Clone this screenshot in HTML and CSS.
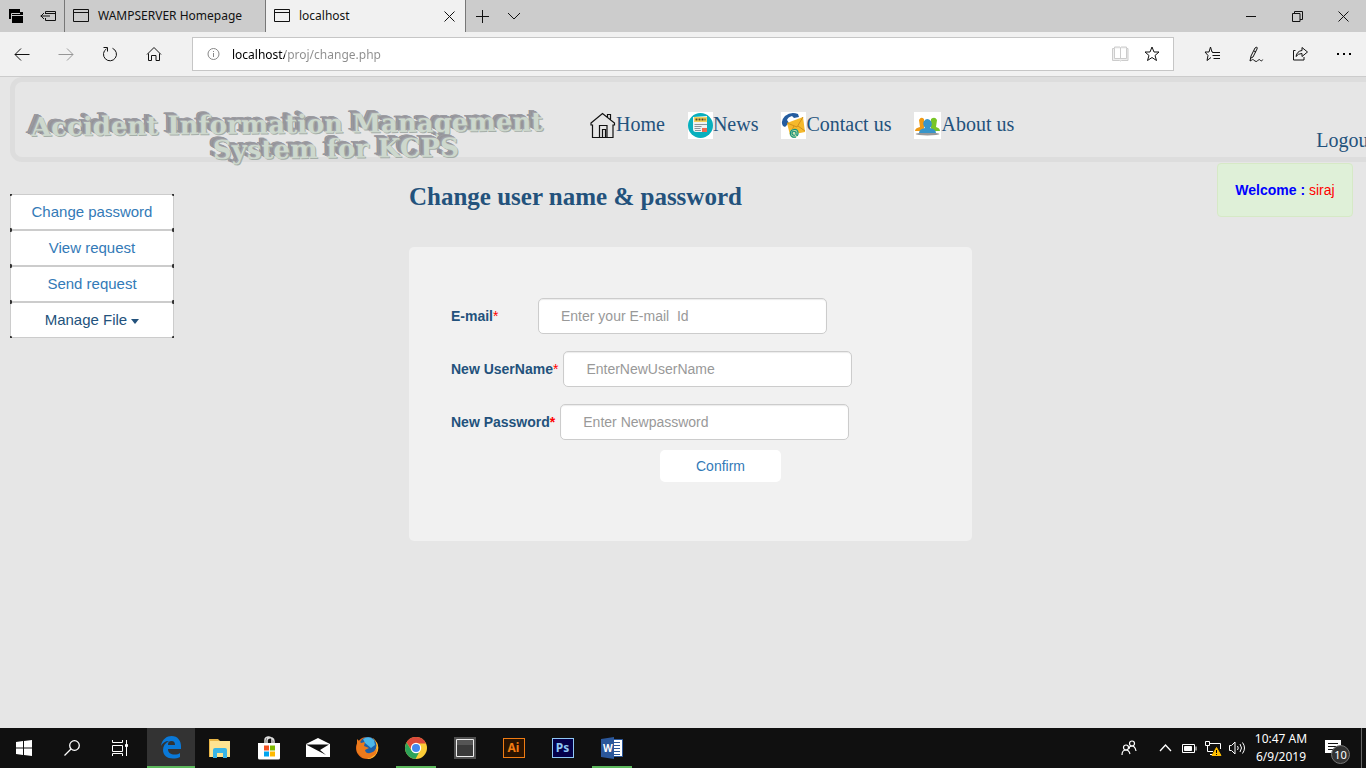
FILE: index.html
```html
<!DOCTYPE html>
<html lang="en">
<head>
<meta charset="utf-8">
<title>localhost</title>
<link rel="stylesheet" href="styles.css">
</head>
<body>
<header class="browser">
  <div class="tabbar">
    <button class="tab-tool first" aria-label="Tabs set aside"><svg width="16" height="16" viewBox="0 0 16 16"><path d="M1 1h11v3h3v11H4v-4H1z"/><path d="M3.500 11V5.500H12M4 7.500h11" stroke="#ccc" fill="none"/></svg></button>
    <button class="tab-tool" aria-label="Set tabs aside"><svg class="line" width="16" height="16" viewBox="0 0 16 16"><path d="M5.500 6V3.500h10v9h-10V10M5.500 5.500h10M.5 8h9.500M4 5L1 8l3 3"/></svg></button>
    <button class="tab"><svg class="line" width="16" height="14" viewBox="0 0 16 14"><path d="M.5.5h15v12H.5zM.5 3.500h15"/></svg><span>WAMPSERVER Homepage</span></button>
    <div class="tab active"><svg class="line" width="16" height="14" viewBox="0 0 16 14"><path d="M.5.5h15v12H.5zM.5 3.500h15"/></svg><span>localhost</span>
      <button class="tab-close" aria-label="Close tab"><svg class="line" width="11" height="11" viewBox="0 0 11 11"><path d="M.5.5l10 10M10.500.5l-10 10"/></svg></button></div>
    <button class="tab-tool" aria-label="New tab"><svg class="line" width="14" height="14" viewBox="0 0 14 14"><path d="M7.500 1v13M1 7.500h13"/></svg></button>
    <button class="tab-tool" aria-label="Show tab previews"><svg class="line" width="14" height="8" viewBox="0 0 14 8"><path d="M1 1l6 6 6-6"/></svg></button>
    <div class="window-buttons">
      <button aria-label="Minimize"><svg class="line" width="11" height="11" viewBox="0 0 11 11"><path d="M0 5.500h10"/></svg></button>
      <button aria-label="Restore"><svg class="line" width="11" height="11" viewBox="0 0 11 11"><path d="M.5 2.500h7.500v8H.5zM2.500 2.500v-2h8v8H8"/></svg></button>
      <button aria-label="Close"><svg class="line" width="11" height="11" viewBox="0 0 11 11"><path d="M.5.5l10 10M10.500.5l-10 10"/></svg></button>
    </div>
  </div>
  <div class="toolbar">
    <button aria-label="Back"><svg class="line" width="16" height="16" viewBox="0 0 16 16"><path d="M15.500 8.500H1M7 2.500l-6 6 6 6"/></svg></button>
    <button aria-label="Forward" class="faded"><svg class="line" width="16" height="16" viewBox="0 0 16 16"><path d="M.5 8.500H15M9 2.500l6 6-6 6"/></svg></button>
    <button aria-label="Refresh"><svg class="line" width="16" height="16" viewBox="0 0 16 16"><path d="M10.500 2.300a6.500 6.500 0 1 1-6 .5M1.500 1.500h4v4"/></svg></button>
    <button aria-label="Home page"><svg class="line" width="16" height="16" viewBox="0 0 16 16"><path d="M1 8.500L8 1.500l7 7M2.500 7.500v7h3V9.500h4.500v5h3.500v-7"/></svg></button>
    <div class="address">
      <svg class="info" width="14" height="14" viewBox="0 0 14 14"><circle cx="6.500" cy="7" r="5.500"/><path d="M6.500 6v4M6.500 4v1"/></svg>
      <input class="url" type="text" aria-label="Address" value="localhost/proj/change.php">
      <button aria-label="Reading view"><svg width="17" height="16" viewBox="0 0 17 16" fill="#eee" stroke="#ccc"><path d="M.5 2.500h2v-1.500h5.500l.5.5.5-.5h5.500v1.500h1.500v12H9.500l-1 .5-1-.5h-7zM2.500 2.500v10h5.500l.5.5.5-.5h5.500v-10M8.500 2v11"/></svg></button>
      <button aria-label="Add to favorites"><svg class="line" width="16" height="16" viewBox="0 0 16 16"><path d="M8 1l2 5h5l-4 3.500 1.500 5L8 11.500l-4.500 3 1.500-5L1 6h5z"/></svg></button>
    </div>
    <div class="actions">
      <button aria-label="Favorites"><svg class="line" width="17" height="16" viewBox="0 0 17 16"><path d="M9.500 6.500L8 6 6.500 1 5 6H1l3 3.500-1 5 4-3M8.500 6.500H16M8.500 9.500H16M9.500 12.500H16"/></svg></button>
      <button aria-label="Add notes"><svg class="line" width="16" height="16" viewBox="0 0 16 16"><path d="M2 15l1-5L7 2q3-2 2 1L5 11l-2 1M6 5l2 1M2 15c4-2 2-2 5 0s3-3 5-1 2 0 3-.5"/></svg></button>
      <button aria-label="Share"><svg class="line" width="17" height="16" viewBox="0 0 17 16"><path d="M3.500 4.500h-2v9.500h10.500v-3M4 10.500Q5 5 10 4.500V1.500l5.500 4.500L10 10.500V7.500Q6 7.500 4 10.500z"/></svg></button>
      <button aria-label="More"><svg width="16" height="4" viewBox="0 0 16 4"><path d="M1 1h2v2H1zM7 1h2v2H7zM13 1h2v2h-2z"/></svg></button>
    </div>
  </div>
</header>

<div class="page">
  <header class="site-header">
    <div class="brand"><span class="brand-line">Accident Information Management</span><span class="brand-line second">System for KCPS</span></div>
    <nav class="site-nav">
      <a href="#home"><svg width="26" height="27" viewBox="0 0 26 27" fill="none" stroke="#111" stroke-width="1.200"><path d="M1 11L12.500 1.500 24.500 11v2H23v12.500H2.500V13H1zM17.500 5V2.500h3V8M9.500 25V13.500h7.500V25M12.500 25v-7.500h3V25"/></svg>Home</a>
      <a href="#news"><svg width="25" height="27" viewBox="0 0 25 27"><path fill="#fff" d="M0 0h25v27H0z"/><circle cx="12.500" cy="13.500" r="12.500" fill="#08afbd"/><path fill="#eef3f3" d="M5 5l14-1v16H8q-3 0-3-3z"/><path fill="#f4d35f" d="M6 5h13v5H6z"/><path stroke="#584b25" stroke-width="2" stroke-dasharray="2 1" d="M7.500 7.500h10"/><path stroke="#8b949b" d="M6.500 12.500H19M6.500 14.500h7M6.500 16.500h6M7 18.500h6"/><path fill="#f1694e" d="M14 16h5v4h-5z"/></svg>News</a>
      <a href="#contact"><svg width="25" height="27" viewBox="0 0 25 27"><path fill="#fff" d="M0 0h25v27H0z"/><path fill="#245c9f" d="M2 14Q-1 9 4 4q6-5 13-2l1 3-5 1-2-2q-4 1-5 4l2 3-4 4z"/><path fill="#f5b92c" d="M6 11l16-6 2 15-15 3z"/><path fill="none" stroke="#c98716" stroke-width=".8" d="M6 11l10 4 6-10M9 22l4-8M24 19l-7-5"/><circle cx="13" cy="21.500" r="4.500" fill="#cfe3b0"/><path fill="none" stroke="#14917b" stroke-width="1.200" d="M15 25q-5 1-5.500-3T13 17.500t4 3.500-2 1.500v-3M15 21.500a2 2 0 1 0-1 1.500"/></svg>Contact us</a>
      <a href="#about"><svg width="27" height="27" viewBox="0 0 27 27"><path fill="#fff" d="M0 0h27v27H0z"/><ellipse cx="13.500" cy="22" rx="12" ry="1.500" fill="#999"/><path fill="#ef9a14" d="M1 19q0-3 5-4l-1-7q2-4 5-1v9l-1 3z"/><path fill="#78c527" d="M26 19q0-3-4-4l1-7q-2-4-6-1v9l1 3z"/><path fill="#3895c9" d="M5 21q0-4 6-5-3-4-1-7 3-4 7 0 2 4-1 7 6 1 6 5z"/></svg>About us</a>
    </nav>
    <a class="logout" href="#logout">Logout</a>
  </header>

  <div class="columns">
    <nav class="side">
      <ul>
        <li><a href="#change">Change password</a></li>
        <li><a href="#view">View request</a></li>
        <li><a href="#send">Send request</a></li>
        <li><button class="menu-toggle">Manage File <span class="caret"></span></button></li>
      </ul>
    </nav>
    <main class="content">
      <h2>Change user name &amp; password</h2>
      <form class="card">
        <div class="field"><label class="short" for="email">E-mail<span class="star">*</span></label><input id="email" type="text" placeholder="Enter your E-mail  Id"></div>
        <div class="field"><label for="user">New UserName<span class="star">*</span></label><input id="user" type="text" placeholder="EnterNewUserName"></div>
        <div class="field"><label for="pass">New Password<span class="star strong">*</span></label><input id="pass" type="password" placeholder="Enter Newpassword"></div>
        <button class="confirm" type="button">Confirm</button>
      </form>
    </main>
    <aside class="welcome"><b>Welcome :</b> <span>siraj</span></aside>
  </div>
</div>

<footer class="taskbar">
  <button class="sys" aria-label="Start"><svg width="16" height="16" viewBox="0 0 16 16" fill="#fff"><path d="M0 2l7-1v6.500H0zM8 1l8-1v7.500H8zM0 8.500h7V15l-7-1zM8 8.500h8V16l-8-1z"/></svg></button>
  <button class="sys" aria-label="Search"><svg width="16" height="16" viewBox="0 0 16 16" fill="none" stroke="#fff" stroke-width="1.300"><circle cx="10.500" cy="5.500" r="4.800"/><path d="M7 9L.5 15.500"/></svg></button>
  <button class="sys" aria-label="Task view"><svg width="17" height="16" viewBox="0 0 17 16" fill="none" stroke="#fff"><path d="M.5 0v2.500h10V0M.5 5.500h10v6H.5zM.5 16v-2.500h10V16M14.500 0v16"/><path fill="#fff" d="M13.500 4.500h2v2h-2z"/></svg></button>
  <div class="apps">
    <button class="app current" aria-label="Edge"><svg width="22" height="24" viewBox="0 0 22 24"><path fill="#0a79d8" d="M1 11C2 4 7 1 11.500 1 18 1 21 6 21 11v3H8c0 4 3 5.500 6.500 5.500 2.500 0 4-.5 5.500-1.500v4c-2 1-4.500 1.500-7 1.500C7 23.500 3 20 3 15c0-4 2-7 6-9-4 0-6.500 2-8 5zm7-1h7c0-2.500-1-4-3.500-4S8 7.500 8 10z"/></svg></button>
    <button class="app" aria-label="File Explorer"><svg width="22" height="20" viewBox="0 0 22 20"><path fill="#e8b546" d="M0 1h9l2 2h10v16H0z"/><path fill="#fee391" d="M1 3h20v16H1z"/><path fill="#38b5e7" d="M4 12q0-2 2-2h10q2 0 2 2v8h-4v-5H8v5H4z"/></svg></button>
    <button class="app" aria-label="Store"><svg width="24" height="24" viewBox="0 0 24 24"><path fill="none" stroke="#ddd" stroke-width="1.500" d="M8 7V4q0-2.500 3-3t4 2v4M10 7V4q1-3 5-2 2 1 2 3v2"/><path fill="#fff" d="M1 7h22v15q0 1.500-1.500 1.500h-19Q1 23.500 1 22z"/><path fill="#f25022" d="M7 9.500h5v5H7z"/><path fill="#7fba00" d="M13 9.500h5v5h-5z"/><path fill="#00a4ef" d="M7 15.500h5v5H7z"/><path fill="#ffb900" d="M13 15.500h5v5h-5z"/></svg></button>
    <button class="app" aria-label="Mail"><svg width="24" height="20" viewBox="0 0 24 20"><path fill="#fff" d="M0 6l12-6 12 6v13H0z"/><path fill="#101010" d="M0 6.500h23L14 12l6 5z"/></svg></button>
    <button class="app" aria-label="Firefox"><svg width="24" height="24" viewBox="0 0 24 24"><circle cx="12" cy="12" r="11" fill="#e66a16"/><path fill="#ffb52e" d="M18 2q8 7 4 15-3 6-10 6 8-5 8-11z"/><circle cx="13" cy="9.500" r="8.500" fill="#1c5fa8"/><path fill="#4db7e8" d="M8 3q6-4 11 1l1 5-4 3-6-5z"/><path fill="#ec7a1c" d="M2 3l4 4 4-1-1 4 5 2-4 2q1 4 5 3 5-1 7-5l-1 6-6 4H8l-6-6z"/></svg></button>
    <button class="app open" aria-label="Chrome"><svg width="24" height="24" viewBox="0 0 24 24"><circle cx="12" cy="12" r="11" fill="#fbcc36"/><path fill="#db4a3c" d="M2.500 6.500A11 11 0 0 1 22 7.500H12L7.500 14z"/><path fill="#2da35a" d="M2.500 6.500l5 8Q10 18 15 16.500L11.500 23A11 11 0 0 1 2.500 6.500z"/><circle cx="12" cy="12" r="5.200" fill="#fff"/><circle cx="12" cy="12" r="4" fill="#4388ef"/></svg></button>
    <button class="app" aria-label="Window"><svg width="22" height="22" viewBox="0 0 22 22"><path fill="#505050" d="M0 0h22v22H0z"/><path fill="#3a3a3a" stroke="#eee" d="M2.500 2.500h17v17h-17z"/><path fill="#555" d="M3 3h16v5H3z"/></svg></button>
    <button class="app" aria-label="Illustrator"><span class="adobe ai">Ai</span></button>
    <button class="app" aria-label="Photoshop"><span class="adobe ps">Ps</span></button>
    <button class="app open" aria-label="Word"><svg width="22" height="22" viewBox="0 0 22 22"><path fill="#fff" stroke="#2b579a" d="M11 2.500h10.500v17H11z"/><path stroke="#2b579a" d="M13 5.500h6M13 8.500h6M13 11.500h6M13 14.500h6M13 17.500h6"/><path fill="#2b579a" d="M0 2l13-2v22L0 20z"/><text x="2" y="15" class="word-w">W</text></svg></button>
  </div>
  <div class="tray">
    <button class="people" aria-label="People"><svg width="16" height="16" viewBox="0 0 16 16" fill="none" stroke="#fff" stroke-width="1.200"><circle cx="5" cy="7.500" r="2.500"/><path d="M1 15q0-5 4-5 3 0 4 4"/><circle cx="11" cy="3.500" r="2.500"/><path d="M8 9q0-3 3-3t4 5"/></svg></button>
    <button aria-label="Show hidden icons"><svg width="13" height="8" viewBox="0 0 13 8" fill="none" stroke="#fff" stroke-width="1.300"><path d="M1 7l5.500-6L12 7"/></svg></button>
    <button aria-label="Battery"><svg width="15" height="9" viewBox="0 0 15 9" fill="none" stroke="#fff"><path d="M.5.5h12v8H.5zM14 2.500v4"/><path fill="#fff" d="M2.500 2.500h7v4h-7z"/></svg></button>
    <button aria-label="Network"><svg width="17" height="15" viewBox="0 0 17 15" fill="none" stroke="#fff"><path d="M.5.500h4v4h-4zM5 2.500h10.500V8M2.500 5v5.500H8M5 13.500h3"/><path fill="#ffbf00" stroke="#ffbf00" d="M11.500 6.500l4.500 8H7z"/><path stroke="#000" d="M11.500 9v3M11.500 13v1"/></svg></button>
    <button aria-label="Volume"><svg width="17" height="14" viewBox="0 0 17 14" fill="none" stroke="#fff"><path d="M.5 4.500h2l3.500-3.500v12L2.500 9.500h-2zM8.500 5q1.500 2 0 4M11 3q3 4 0 8M13.500 1.500q4 5.500 0 11"/></svg></button>
    <time class="clock"><span>10:47 AM</span><span>6/9/2019</span></time>
    <button class="notices" aria-label="Notifications"><svg width="16" height="17" viewBox="0 0 16 17"><path fill="#fff" d="M0 0h16v13h-6l-3 3v-3H0z"/><path stroke="#111" d="M3 3.500h10M3 6.500h10M3 9.500h7"/></svg><span class="badge">10</span></button>
    <span class="peek"></span>
  </div>
</footer>
</body>
</html>
```
FILE: styles.css
```css
* { box-sizing: border-box; }
body {
  margin: 0;
  height: 100vh;
  display: flex;
  flex-direction: column;
  overflow: hidden;
  background: #e6e6e6;
  font: 14px/20px "Liberation Sans", Arial, sans-serif;
}
button { border: 0; padding: 0; background: none; font: inherit; color: inherit; }
svg { display: block; flex: none; }
a { text-decoration: none; }
.line { fill: none; stroke: #111; }

/* Browser frame */
.browser { font-family: "Noto Sans", sans-serif; font-size: 12px; border-bottom: 1px solid #ccc; }
.tabbar { display: flex; height: 32px; background: #ccc; }
.tab-tool { width: 32px; display: grid; place-items: center; }
.tab {
  width: 201px;
  display: flex;
  align-items: center;
  gap: 9px;
  padding: 0 8px;
  border-left: 1px solid #777;
  text-align: left;
  white-space: nowrap;
  color: #111;
}
.tab.active { background: #f1f1f1; border-right: 1px solid #777; }
.tab-close { margin-left: auto; padding: 2px; }
.window-buttons { display: flex; margin-left: auto; }
.window-buttons button { width: 46px; display: grid; place-items: center; }
.toolbar { display: flex; align-items: center; height: 44px; background: #f1f1f1; }
.toolbar button { width: 44px; height: 32px; display: grid; place-items: center; }
.toolbar .faded { opacity: .4; }
.address {
  flex: 1;
  display: flex;
  align-items: center;
  height: 34px;
  margin-left: 16px;
  padding: 0 5px 0 14px;
  background: #fff;
  border: 1px solid #c6c6c6;
}
.address button { width: 32px; }
.info { fill: none; stroke: #888; }
.url {
  flex: 1;
  min-width: 0;
  margin-left: 11px;
  padding: 2px 0 0;
  border: 0;
  outline: 0;
  font: inherit;
  color: transparent;
  background: linear-gradient(90deg, #000 53px, #8c8c8c 53px);
  -webkit-background-clip: text;
  background-clip: text;
}
.actions { display: flex; margin-left: 16px; }

/* Web page */
.page { flex: 1; min-height: 0; overflow: hidden; }
.site-header {
  display: flex;
  align-items: flex-start;
  margin: 0 -30px 0 10px;
  padding: 30px 17px 0 16px;
  border: 5px solid #ddd;
  border-radius: 12px;
  font: 20px/24px "Liberation Serif", "Times New Roman", serif;
}
.site-header a { color: #23527c; }
.brand {
  flex: 0 0 559px;
  margin-bottom: -5px;
  display: flex;
  flex-direction: column;
  font: bold 26px/25px "DejaVu Serif", serif;
  color: #cdd8cd;
  white-space: nowrap;
  text-shadow: 1px 1px 0 #a5aea8, -1px -1px 0 #a3a3a9, -2px -2px 0 #98989d, -3px -2px 0 #929297, -4px -3px 0 #9c9ca2, -5px -3px 0 #929298;
}
.brand-line { transform: rotate(-.6deg); }
.second { padding-left: 182px; }
.site-nav { display: flex; gap: 23px; }
.site-nav a { display: flex; white-space: nowrap; }
.logout { margin: 16px 0 0 auto; }
.columns { display: flex; justify-content: space-between; align-items: flex-start; padding: 0 13px 0 10px; }
.side { flex: 0 0 164px; margin-top: 32px; font-size: 15px; }
.side ul { margin: 0; padding: 0; list-style: none; }
.side li {
  padding: 1px;
  background:
    linear-gradient(#333, #333) 0 0 / 2px 2px no-repeat,
    linear-gradient(#333, #333) 100% 0 / 2px 2px no-repeat,
    linear-gradient(#333, #333) 0 100% / 2px 2px no-repeat,
    linear-gradient(#333, #333) 100% 100% / 2px 2px no-repeat,
    #ccc;
}
.side a, .menu-toggle {
  display: block;
  width: 100%;
  height: 34px;
  line-height: 34px;
  border-radius: 2px;
  background: #fff;
  color: #337ab7;
  text-align: center;
}
.side .menu-toggle { color: #23527c; }
.caret { display: inline-block; vertical-align: middle; border: 4px solid transparent; border-top: 5px solid #23527c; border-bottom: 0; }
.content { flex: 0 1 563px; margin-right: 10px; }
h2 { margin: 20px 0 35px; font: bold 25px/30px "Liberation Serif", "Times New Roman", serif; color: #23527c; }
.card { padding: 51px 42px 59px; border-radius: 5px; background: #f1f1f1; }
.field { display: flex; align-items: center; gap: 5px; margin-bottom: 17px; }
.field label { font-weight: bold; color: #23527c; }
.field .short { width: 82px; }
.star { color: #f00; font-weight: normal; }
.strong { font-weight: bold; }
.field input {
  width: 289px;
  height: 36px;
  padding: 0 22px;
  border: 1px solid #ccc;
  border-radius: 5px;
  background: #fff;
  box-shadow: inset 0 1px 1px rgba(0, 0, 0, .08);
  font: inherit;
}
.field input::placeholder { color: #999; }
.confirm { display: block; width: 121px; height: 32px; margin: -7px 0 0 209px; border-radius: 5px; background: #fff; color: #337ab7; }
.welcome { flex: 0 0 136px; margin-top: 1px; padding: 16px 0; line-height: 20px; text-align: center; background: #dff0d8; border: 1px solid #d6e9c6; border-radius: 4px; color: #f00; }
.welcome b { color: #00f; }

/* Taskbar */
.taskbar { display: flex; height: 40px; background: #101010; color: #fff; font: 12px/18px "Noto Sans", sans-serif; }
.sys { width: 48px; display: grid; place-items: center; }
.apps { display: flex; margin-left: 3px; }
.app { width: 49px; display: grid; place-items: center; }
.current { width: 48px; background: #333; border-bottom: 2px solid #5cb85c; }
.open { background: linear-gradient(#5cb85c, #5cb85c) 50% 100% / 40px 2px no-repeat; }
.adobe { width: 22px; height: 20px; border: 1px solid; font: bold 12px/18px "Noto Sans", sans-serif; }
.ai { color: #f07c13; background: #2a1300; }
.ps { color: #8fc8f5; background: #04004a; }
.word-w { font: bold 10px "Noto Sans", sans-serif; fill: #fff; }
.tray { display: flex; margin-left: auto; }
.tray button { width: 24px; display: grid; place-items: center; }
.tray .people { width: 48px; }
.clock { width: 64px; display: flex; flex-direction: column; justify-content: center; text-align: center; white-space: nowrap; }
.tray .notices { position: relative; width: 48px; padding-right: 8px; }
.badge { position: absolute; right: 11px; bottom: 4px; width: 19px; height: 19px; border: 1px solid #777; border-radius: 50%; background: #333; font-size: 11px; line-height: 17px; }
.peek { width: 5px; border-left: 1px solid #666; }
```
